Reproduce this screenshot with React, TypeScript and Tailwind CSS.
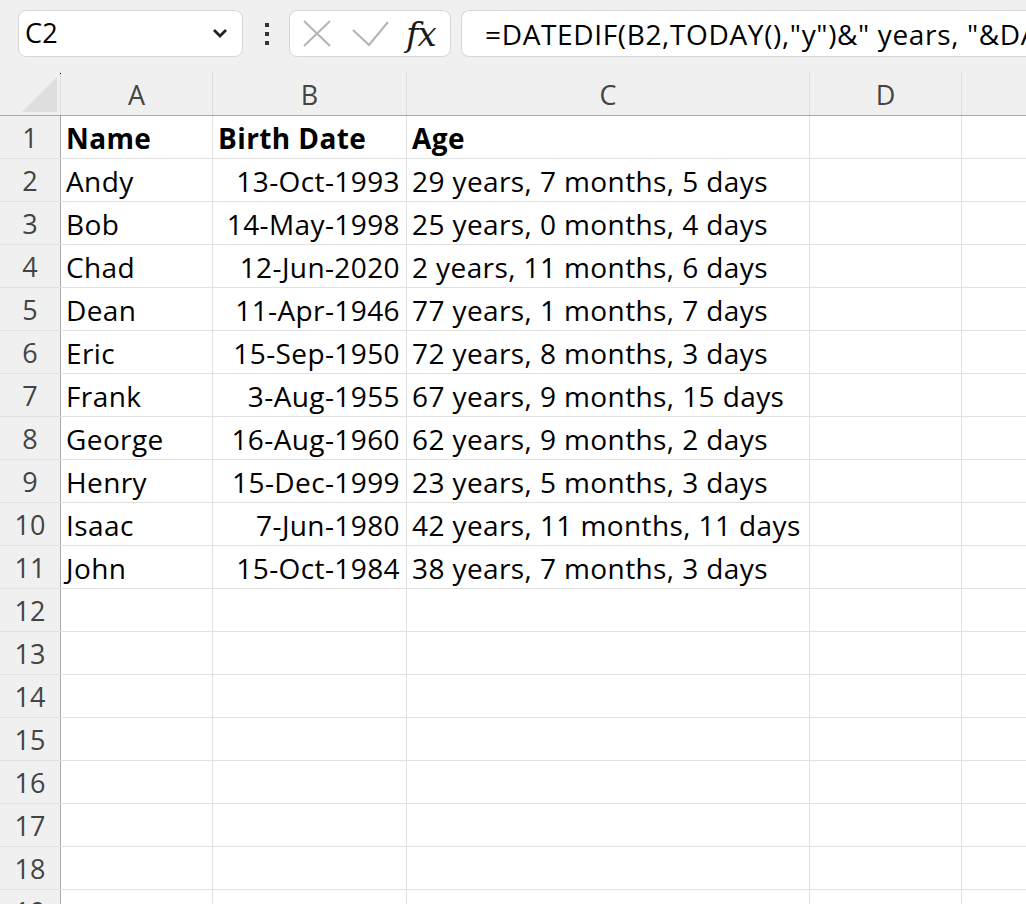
import React from "react";

const font = "font-['Open_Sans','Noto_Sans',sans-serif]";

const rows: [string, string, string][] = [
  ["Andy", "13-Oct-1993", "29 years, 7 months, 5 days"],
  ["Bob", "14-May-1998", "25 years, 0 months, 4 days"],
  ["Chad", "12-Jun-2020", "2 years, 11 months, 6 days"],
  ["Dean", "11-Apr-1946", "77 years, 1 months, 7 days"],
  ["Eric", "15-Sep-1950", "72 years, 8 months, 3 days"],
  ["Frank", "3-Aug-1955", "67 years, 9 months, 15 days"],
  ["George", "16-Aug-1960", "62 years, 9 months, 2 days"],
  ["Henry", "15-Dec-1999", "23 years, 5 months, 3 days"],
  ["Isaac", "7-Jun-1980", "42 years, 11 months, 11 days"],
  ["John", "15-Oct-1984", "38 years, 7 months, 3 days"],
];

const Toolbar = () => (
  <div className="flex h-[72px] items-start bg-[#f0f0f0] pt-[10px]">
    {/* Name box */}
    <div className="ml-[18px] flex h-[47px] w-[225px] items-center justify-between rounded-[8px] border border-[#d6d6d6] bg-white pl-[6px] pr-[14px]">
      <span className="text-[27px] tracking-[0.3px] text-black">C2</span>
      <svg width="16" height="11" viewBox="0 0 16 11">
        <path d="M2 2 L8 8 L14 2" fill="none" stroke="#222" strokeWidth="2.8" />
      </svg>
    </div>

    {/* separator dots */}
    <div className="ml-[20px] flex h-[47px] w-[8px] flex-col items-center justify-center gap-[5px]">
      <span className="h-[4px] w-[4px] bg-[#333]" />
      <span className="h-[4px] w-[4px] bg-[#333]" />
      <span className="h-[4px] w-[4px] bg-[#333]" />
    </div>

    {/* cancel / enter / fx */}
    <div className="ml-[18px] flex h-[47px] w-[162px] items-center rounded-[8px] border border-[#d6d6d6] bg-white">
      <svg className="ml-[12px]" width="30" height="28" viewBox="0 0 30 28">
        <path d="M2 1 L28 26 M28 1 L2 26" stroke="#b4b4b4" strokeWidth="2" />
      </svg>
      <svg className="ml-[20px]" width="38" height="28" viewBox="0 0 38 28">
        <path d="M1 10 L17 25 L36 2" fill="none" stroke="#b4b4b4" strokeWidth="2" />
      </svg>
      <span className="ml-[16px] font-['DejaVu_Serif',serif] text-[34px] italic leading-none tracking-[-1px] text-[#1a1a1a]">
        fx
      </span>
    </div>

    {/* formula bar */}
    <div className="ml-[10px] flex h-[47px] flex-1 items-center overflow-hidden rounded-l-[8px] border border-r-0 border-[#d6d6d6] bg-white pl-[23px]">
      <span className="whitespace-nowrap text-[28px] tracking-[0.65px] text-black">
        =DATEDIF(B2,TODAY(),"y")&amp;" years, "&amp;DATEDIF(B2,TODAY(),"ym")
      </span>
    </div>
  </div>
);

const colWidths = ["w-[152px]", "w-[194px]", "w-[403px]", "w-[152px]"];

const HeaderRow = () => (
  <div className="flex h-[44px] border-b border-[#a8a8a8] bg-[#f0f0f0]">
    <div className="relative h-[43px] w-[61px] shrink-0 border-r border-[#dcdcdc]">
      <span className="absolute left-[60px] top-[1px] h-[1px] w-[1px] bg-black" />
      <svg className="absolute left-[22px] top-[5px]" width="36" height="36" viewBox="0 0 36 36">
        <path d="M35 0 L35 35 L0 35 Z" fill="#dedede" />
      </svg>
    </div>
    {["A", "B", "C", "D"].map((c, i) => (
      <div
        key={c}
        className={`${colWidths[i]} flex shrink-0 items-center justify-center border-r border-[#dcdcdc] pt-[4px] text-[27px] text-[#444]`}
      >
        {c}
      </div>
    ))}
    <div className="flex-1" />
  </div>
);

const Row = ({ n, cells, bold }: { n: number; cells: string[]; bold?: boolean }) => (
  <div className="flex h-[43px] border-b border-[#e1e1e1]">
    <div className="flex h-[42px] w-[61px] shrink-0 items-center justify-center border-r border-[#a8a8a8] bg-[#f0f0f0] pt-[3px] text-[27px] text-[#444]">
      {n}
    </div>
    {cells.map((v, i) => (
      <div
        key={i}
        className={`${colWidths[i]} flex shrink-0 items-center overflow-visible whitespace-nowrap border-r border-[#e1e1e1] pt-[1px] text-[28px] tracking-[0.4px] text-black ${
          i === 1 && !bold ? "justify-end pr-[6px]" : "pl-[5px]"
        } ${bold ? "font-bold" : ""}`}
      >
        {v}
      </div>
    ))}
    <div className="flex-1" />
  </div>
);

export default function App() {
  const all: { cells: string[]; bold?: boolean }[] = [
    { cells: ["Name", "Birth Date", "Age", ""], bold: true },
    ...rows.map((r) => ({ cells: [...r, ""] })),
  ];
  while (all.length < 19) all.push({ cells: ["", "", "", ""] });

  return (
    <div className={`${font} h-[904px] w-[1026px] overflow-hidden bg-white`}>
      <Toolbar />
      <HeaderRow />
      {all.map((r, i) => (
        <Row key={i} n={i + 1} cells={r.cells} bold={r.bold} />
      ))}
    </div>
  );
}
